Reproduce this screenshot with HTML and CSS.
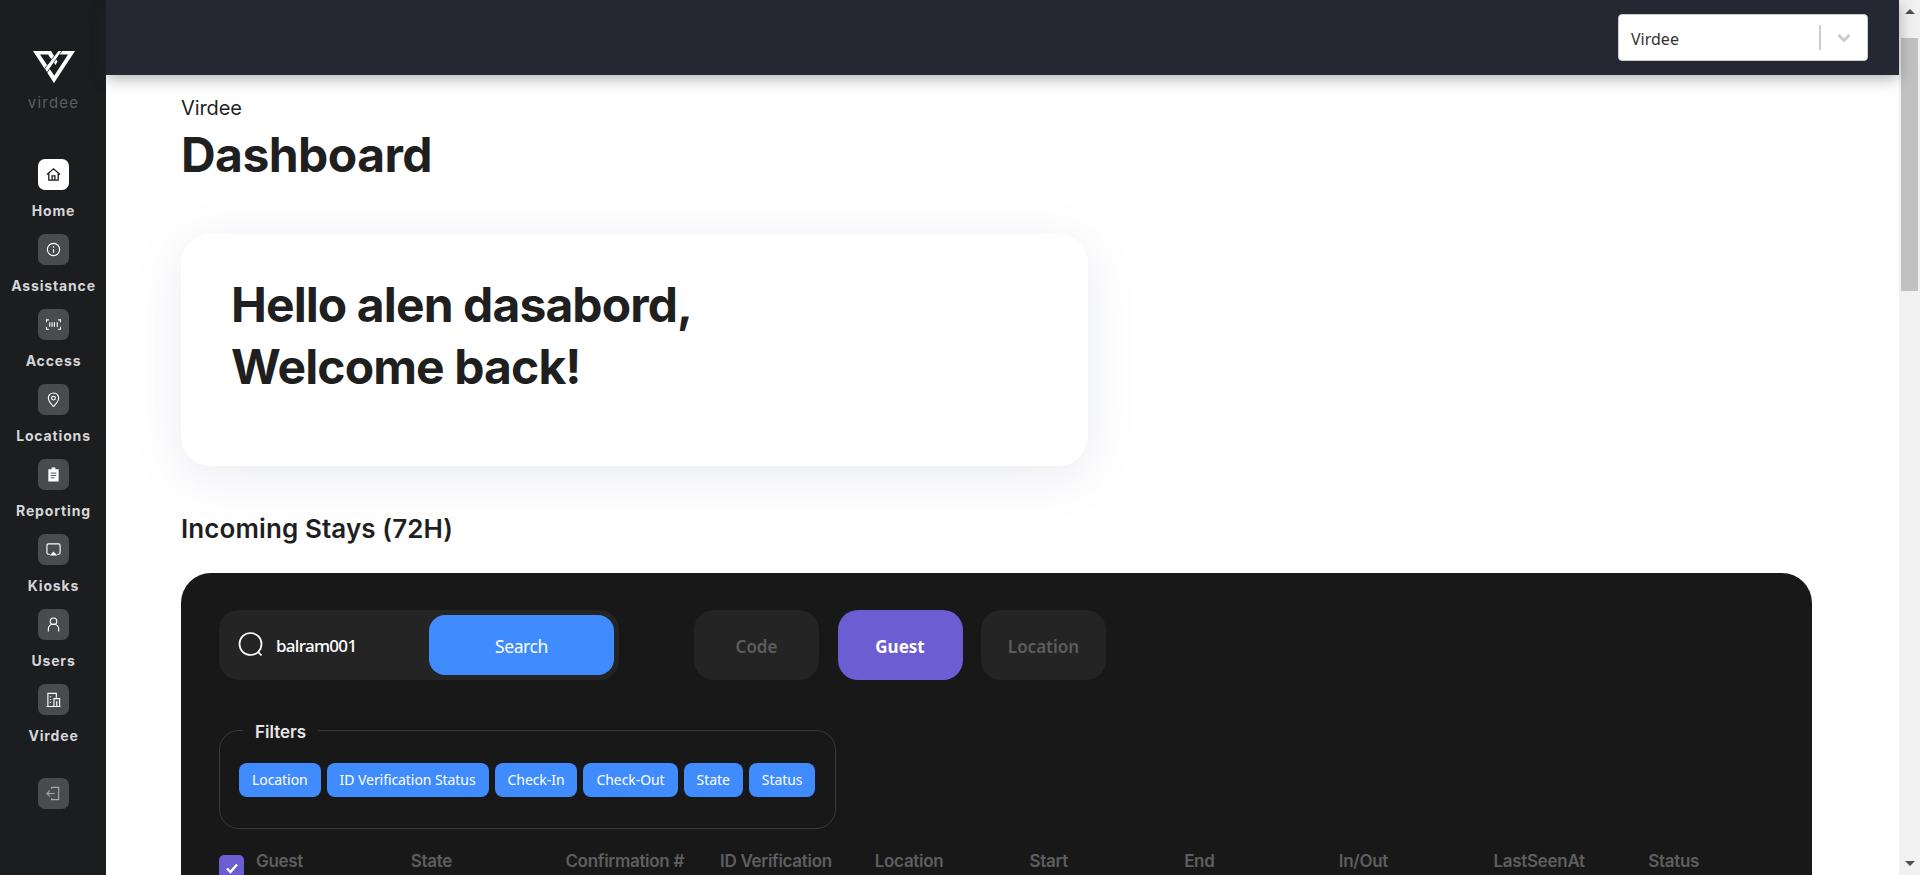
FILE: index.html
```html
<!DOCTYPE html>
<html lang="en">
<head>
<meta charset="utf-8">
<title>Virdee Dashboard</title>
<link rel="stylesheet" href="styles.css">
</head>
<body>
<div class="app">
  <aside class="sidebar">
    <div class="brand">
      <svg class="logo" viewBox="0 0 42 32">
        <path class="logo-part" d="M0 0H18L24.500 10.500 22.500 14 15 3.500H7L22.500 26.500 21 32Z"/>
        <path class="logo-part" d="M42 0H28.500L26 3.500H35L20 26.500 21 32Z"/>
        <path class="logo-part logo-cross" d="M26 3.500 28.500 0H25.500L12 17.500 14 21Z"/>
      </svg>
      <span class="brand-name">virdee</span>
    </div>
    <nav class="nav">
      <a class="nav-item active"><span class="nav-icon"><svg viewBox="0 0 16 16"><path d="M1 8 8 2l7 6M3 7v7h10V7M6.500 14V9.500h3V14"/></svg></span><span class="nav-label">Home</span></a>
      <a class="nav-item"><span class="nav-icon"><svg viewBox="0 0 16 16"><circle cx="8" cy="8" r="6.500"/><path d="M8 7.500V11.500M8 4.500v1.500"/></svg></span><span class="nav-label">Assistance</span></a>
      <a class="nav-item"><span class="nav-icon"><svg viewBox="0 0 16 16"><path d="M3 3H.5v2.500M13 3h2.500v2.500M3 13H.5v-2.500M13 13h2.500v-2.500M4 5.500v5M6.500 5.500v5M9 5.500v5M12 5.500v5"/></svg></span><span class="nav-label">Access</span></a>
      <a class="nav-item"><span class="nav-icon"><svg viewBox="0 0 16 16"><path d="M8 15.500C5 12.500 2.500 9.500 2.500 6.500a5.500 5.500 0 0 1 11 0C13.500 9.500 11 12.500 8 15.500Z"/><circle cx="8" cy="6.500" r="2"/></svg></span><span class="nav-label">Locations</span></a>
      <a class="nav-item"><span class="nav-icon"><svg viewBox="0 0 16 16"><path class="solid" d="M2.500 2.500h3.500V.5h4v2h3.500V15.500H2.500Z"/><path class="cut" d="M5 6.500h6M5 9h6M5 11.500h4"/></svg></span><span class="nav-label">Reporting</span></a>
      <a class="nav-item"><span class="nav-icon"><svg viewBox="0 0 16 16"><path d="M4 13H2.500A1.500 1.500 0 0 1 1 11.500V3.500A1.500 1.500 0 0 1 2.500 2h11A1.500 1.500 0 0 1 15 3.500v8a1.500 1.500 0 0 1-1.500 1.500H12"/><path class="solid" d="M8 10l4 4.500H4Z"/></svg></span><span class="nav-label">Kiosks</span></a>
      <a class="nav-item"><span class="nav-icon"><svg viewBox="0 0 16 16"><circle cx="8" cy="4.500" r="3.500"/><path d="M2.500 15.500v-3a5.500 5 0 0 1 11 0v3"/></svg></span><span class="nav-label">Users</span></a>
      <a class="nav-item"><span class="nav-icon"><svg viewBox="0 0 16 16"><path d="M.5 15.500h15M2 15V1.500h9V6M8.500 15V7h6v8M11.500 9.500V15M4 5h1.500M4 8h1.500M4 11h1.500"/></svg></span><span class="nav-label">Virdee</span></a>
    </nav>
    <a class="logout"><svg viewBox="0 0 16 16"><path d="M6 3V1.500h7.500v13H6V13M9 8H1M4 5 1 8l3 3"/></svg></a>
  </aside>
  <div class="main">
    <header class="topbar">
      <div class="select">
        <span class="select-value">Virdee</span>
        <span class="select-sep"></span>
        <svg class="select-arrow" viewBox="0 0 20 20"><path d="M4.500 7 10 12.500 15.500 7"/></svg>
      </div>
    </header>
    <main class="content">
      <p class="crumb">Virdee</p>
      <h1 class="title">Dashboard</h1>
      <section class="welcome">
        <h2>Hello alen dasabord,<br>Welcome back!</h2>
      </section>
      <h3 class="section-title">Incoming Stays (72H)</h3>
      <section class="panel">
        <div class="toolbar">
          <div class="search">
            <svg class="search-icon" viewBox="0 0 26 26"><circle cx="12.500" cy="12" r="11"/><path d="M20 20l3.500 3.500"/></svg>
            <span class="search-text">balram001</span>
            <button class="search-btn">Search</button>
          </div>
          <div class="tabs">
            <button class="tab">Code</button>
            <button class="tab on">Guest</button>
            <button class="tab">Location</button>
          </div>
        </div>
        <fieldset class="filters">
          <legend>Filters</legend>
          <div class="chips">
            <span class="chip">Location</span>
            <span class="chip">ID Verification Status</span>
            <span class="chip">Check-In</span>
            <span class="chip">Check-Out</span>
            <span class="chip">State</span>
            <span class="chip">Status</span>
          </div>
        </fieldset>
        <div class="table-head">
          <span class="check"><svg viewBox="0 0 16 16"><path d="M3 8.500 6.500 12 13 4.500"/></svg></span>
          <span>Guest</span><span>State</span><span>Confirmation #</span><span>ID Verification</span><span>Location</span><span>Start</span><span>End</span><span>In/Out</span><span>LastSeenAt</span><span>Status</span>
        </div>
      </section>
    </main>
  </div>
  <div class="scrollbar">
    <span class="arrow up"></span>
    <span class="thumb"></span>
    <span class="arrow down"></span>
  </div>
</div>
</body>
</html>
```
FILE: styles.css
```css
* { box-sizing: border-box; }
html, body { margin: 0; height: 875px; overflow: hidden; background: #fff; }
body { font-family: Inter, "Liberation Sans", sans-serif; color: #1f1f1f; }
.app { display: flex; height: 875px; overflow: hidden; }

.sidebar { width: 106px; flex: none; background: #1c1d1f; display: flex; flex-direction: column; align-items: center; padding: 51px 0 0 1px; }
.brand { display: flex; flex-direction: column; align-items: center; height: 108px; }
.logo { width: 42px; height: 32px; display: block; }
.logo-part { fill: #fff; }
.logo-cross { stroke: #1c1d1f; stroke-width: 1.2; paint-order: stroke; }
.brand-name { margin-top: 10px; font-size: 15px; line-height: 19px; letter-spacing: 1.2px; color: #5c5d60; font-family: "Inter", sans-serif; }
.nav { display: flex; flex-direction: column; align-items: center; }
.nav-item { display: flex; flex-direction: column; align-items: center; height: 75px; }
.nav-icon, .logout { width: 31px; height: 31px; border-radius: 7px; background: #4a4b4d; display: flex; align-items: center; justify-content: center; flex: none; }
.nav-icon svg, .logout svg { width: 15px; height: 15px; fill: none; stroke: #fff; stroke-width: 1.2; }
.nav-icon svg .solid { fill: #fff; stroke: none; }
.nav-icon svg .cut { stroke: #4a4b4d; stroke-width: 1; }
.nav-item.active .nav-icon { background: #fff; }
.nav-item.active .nav-icon svg { stroke: #1c1d1f; stroke-width: 1.4; }
.nav-label { margin-top: 11px; font-size: 14px; line-height: 20px; font-weight: 700; color: #d4d6d9; letter-spacing: .85px; font-family: Inter, sans-serif; white-space: nowrap; }
.logout { margin-top: 19px; }
.logout svg { stroke: #a8a9ab; }

.main { flex: 1; min-width: 0; display: flex; flex-direction: column; }
.topbar { height: 75px; flex: none; background: #252733; display: flex; justify-content: flex-end; align-items: center; padding: 0 31px 0 0; box-shadow: 0 4px 14px rgba(37, 39, 51, .35); position: relative; z-index: 2; }
.select { width: 250px; height: 47px; background: #fff; border: 1px solid #ccc; border-radius: 4px; display: flex; align-items: center; padding: 0 13px 0 12px; }
.select-value { flex: 1; font-family: "Noto Sans", sans-serif; font-size: 16px; color: #333; padding-top: 3px; }
.select-sep { width: 2px; height: 25px; background: #ccc; margin-right: 13px; }
.select-arrow { width: 20px; height: 20px; fill: none; stroke: #ccc; stroke-width: 3; }

.content { flex: 1; padding: 21px 87px 0 75px; min-height: 0; }
.crumb { margin: 0; font-size: 20px; line-height: 24px; letter-spacing: -.1px; color: #1f1f1f; }
.title { margin: 6px 0 0; font-size: 48px; line-height: 58px; font-weight: 700; letter-spacing: -.55px; color: #1f1f1f; }
.welcome { width: 907px; height: 232px; margin-top: 50px; background: #fff; border-radius: 30px; box-shadow: 0 10px 50px rgba(110, 120, 160, .14); padding: 40px 50px; }
.welcome h2 { margin: 0; font-size: 48px; line-height: 62px; font-weight: 700; letter-spacing: -.9px; color: #1f1f1f; }
.section-title { margin: 47px 0 0; font-size: 26px; line-height: 32px; font-weight: 600; color: #1f1f1f; letter-spacing: .1px; }
.panel { margin-top: 28px; height: 400px; background: #181818; border-radius: 30px; padding: 37px 38px; }

.toolbar { display: flex; gap: 75px; }
.search { width: 400px; height: 70px; background: #242424; border-radius: 20px; display: flex; align-items: center; padding: 5px; }
.search-icon { width: 26px; height: 26px; margin-left: 14px; fill: none; stroke: #fff; stroke-width: 1.7; flex: none; }
.search-text { flex: 1; margin-left: 12px; color: #fff; font-size: 17px; font-weight: 500; font-family: "Noto Sans", sans-serif; letter-spacing: -.7px; }
.search-btn { width: 185px; height: 60px; border: 0; border-radius: 16px; background: #408cff; color: #fff; font-family: "Noto Sans", sans-serif; font-size: 17.500px; letter-spacing: -.4px; padding: 2px 0 0; }
.tabs { display: flex; gap: 18.500px; }
.tab { width: 125px; height: 70px; border: 0; border-radius: 20px; background: #242424; color: #5d5d5d; font-size: 17px; font-weight: 600; font-family: "Noto Sans", sans-serif; padding: 2px 0 0; }
.tab.on { background: #6c5dd3; color: #fff; font-weight: 700; }

.filters { margin: 38px 0 0; width: 617px; height: 111px; border: 1px solid #3a3a3a; border-radius: 20px; padding: 0 19px; min-inline-size: 0; }
.filters legend { margin-left: 4px; padding: 4px 12px 0; color: #e6e6e6; font-size: 17px; line-height: 20px; font-weight: 600; }
.chips { display: flex; gap: 6px; margin-top: 21px; }
.chip { height: 34px; padding: 0 13px; background: #408cff; color: #fff; border-radius: 8px; font-family: "Noto Sans", sans-serif; font-size: 14px; line-height: 33px; letter-spacing: -.07px; white-space: nowrap; }

.table-head { display: grid; grid-template-columns: repeat(10, 154.700px); margin-top: 21px; padding-left: 37px; position: relative; color: #5e5e60; font-size: 17px; line-height: 22px; font-weight: 600; white-space: nowrap; letter-spacing: -.3px; }
.check { position: absolute; left: 0; top: 5px; width: 25px; height: 25px; background: #6c5dd3; border-radius: 5px; display: flex; align-items: center; justify-content: center; }
.check svg { width: 16px; height: 16px; fill: none; stroke: #fff; stroke-width: 2.4; }

.scrollbar { width: 21px; flex: none; background: #f1f1f1; display: flex; flex-direction: column; align-items: center; height: 875px; }
.thumb { width: 17px; height: 253px; background: #c1c1c1; }
.arrow { width: 0; height: 0; border-left: 5px solid transparent; border-right: 5px solid transparent; flex: none; }
.arrow.up { border-bottom: 5px solid #505050; margin: 9px 0 24px; }
.arrow.down { border-top: 5px solid #505050; margin-top: auto; margin-bottom: 9px; }
```
